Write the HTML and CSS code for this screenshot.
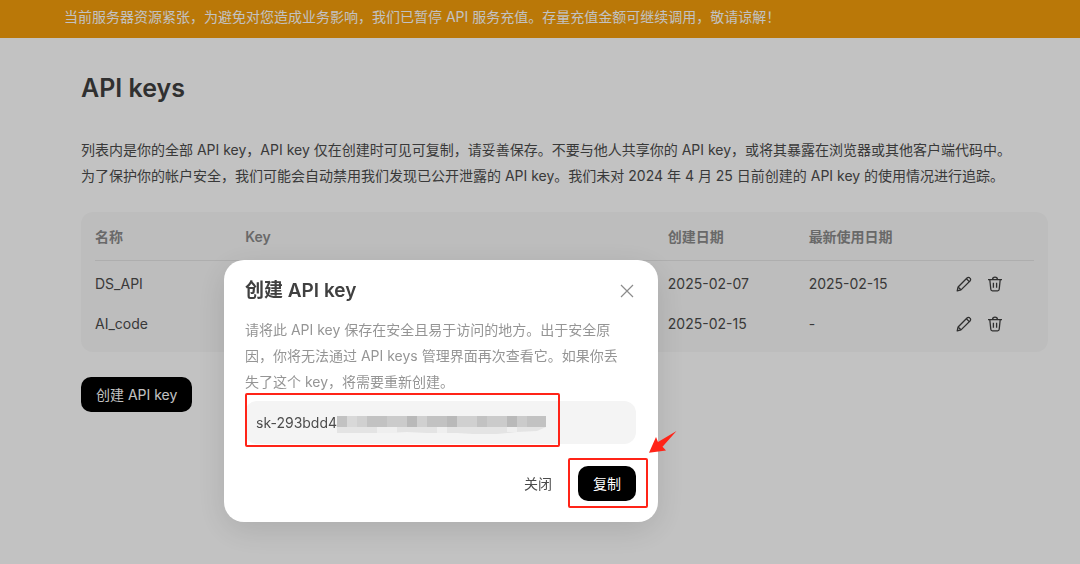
FILE: index.html
```html
<!DOCTYPE html>
<html lang="zh-CN">
  <head>
    <meta charset="UTF-8" />
    <meta name="viewport" content="width=device-width, initial-scale=1.0" />
    <title>API keys</title>
    <link rel="stylesheet" href="styles.css">
  </head>
  <body>
    <!-- icons shared by the table rows -->
    <svg class="sprite" aria-hidden="true">
      <symbol id="pencil" viewBox="0 0 16 16">
        <path d="M1.2 14.8l.9-3.8L11 2a2 2 0 0 1 2.9 0l.1.1a2 2 0 0 1 0 2.9L5 13.9z" />
        <path d="M10.4 2.7l2.9 2.9M2.3 11.2l2.6 2.6" />
      </symbol>
      <symbol id="trash" viewBox="0 0 16 16">
        <path d="M1 3.6h14M5.6 3.4q0-2.2 2.4-2.2t2.4 2.2" />
        <path d="M2.8 3.8l1 9.5q.1 1.5 1.6 1.5h5.2q1.5 0 1.6-1.5l1-9.5M6.4 6.8v5M9.6 6.8v5" />
      </symbol>
    </svg>

    <div class="banner">当前服务器资源紧张，为避免对您造成业务影响，我们已暂停 API 服务充值。存量充值金额可继续调用，敬请谅解！</div>

    <main class="page">
      <h1>API keys</h1>
      <p class="intro">列表内是你的全部 API key，API key 仅在创建时可见可复制，请妥善保存。不要与他人共享你的 API key，或将其暴露在浏览器或其他客户端代码中。<br />为了保护你的帐户安全，我们可能会自动禁用我们发现已公开泄露的 API key。我们未对 2024 年 4 月 25 日前创建的 API key 的使用情况进行追踪。</p>

      <div class="card">
        <table>
          <thead>
            <tr>
              <th class="col-name">名称</th>
              <th class="col-key">Key</th>
              <th class="col-date">创建日期</th>
              <th class="col-used">最新使用日期</th>
              <th class="col-actions"></th>
            </tr>
          </thead>
          <tbody>
            <tr>
              <td>DS_API</td>
              <td></td>
              <td>2025-02-07</td>
              <td>2025-02-15</td>
              <td>
                <div class="actions">
                  <button aria-label="编辑"><svg><use href="#pencil" /></svg></button>
                  <button aria-label="删除"><svg><use href="#trash" /></svg></button>
                </div>
              </td>
            </tr>
            <tr>
              <td>AI_code</td>
              <td></td>
              <td>2025-02-15</td>
              <td>-</td>
              <td>
                <div class="actions">
                  <button aria-label="编辑"><svg><use href="#pencil" /></svg></button>
                  <button aria-label="删除"><svg><use href="#trash" /></svg></button>
                </div>
              </td>
            </tr>
          </tbody>
        </table>
      </div>

      <button class="btn">创建 API key</button>
    </main>

    <div class="overlay">
      <div class="modal" role="dialog" aria-modal="true" aria-labelledby="modal-title">
        <div class="modal-head">
          <h2 id="modal-title">创建 API key</h2>
          <button class="close" aria-label="关闭">
            <svg viewBox="0 0 14 14"><path d="M1 1l12 12M13 1L1 13" /></svg>
          </button>
        </div>
        <p class="modal-text">请将此 API key 保存在安全且易于访问的地方。出于安全原<br />因，你将无法通过 API keys 管理界面再次查看它。如果你丢<br />失了这个 key，将需要重新创建。</p>

        <div class="field">
          <input type="text" value="sk-293bdd4" aria-label="API key" readonly />
          <!-- mosaic over the rest of the key -->
          <svg class="mosaic" viewBox="0 0 209 18" aria-hidden="true">
            <path fill="#cbcbcb" d="M0 0h209v11H0z" />
            <path fill="#c2c2c2" d="M0 0h10v11H0zM30 0h20v11H30zM90 0h20v11H90zM140 0h10v11h-10zM190 0h19v11h-19z" />
            <path fill="#d8d8d8" d="M10 0h10v11H10z" />
            <path fill="#d0d0d0" d="M20 0h10v11H20zM80 0h10v11H80zM120 0h20v11h-20z" />
            <path fill="#b9b9b9" d="M70 0h10v11H70zM110 0h10v11h-10zM170 0h10v11h-10z" />
            <path fill="#e4e4e4" d="M0 11h209l-9 4-20 1-20 2h-24l-16-1H90l-20-1-20 1H0z" />
            <path fill="#efefef" d="M40 11h20v6H40zM100 11h10v6h-10zM170 11h10v5h-10z" />
          </svg>
          <span class="mark mark-key"></span>
        </div>

        <div class="modal-foot">
          <button class="btn-text">关闭</button>
          <div class="copy">
            <button class="btn">复制</button>
            <span class="mark mark-copy"></span>
            <svg class="arrow" viewBox="0 0 28 22" aria-hidden="true">
              <path d="M0 21.8L7 6l2 5L27.5 0 13.5 15.8l3.5 3.7z" />
            </svg>
          </div>
        </div>
      </div>
    </div>
  </body>
</html>
```

FILE: styles.css
```css
* {
  margin: 0;
  padding: 0;
  box-sizing: border-box;
}

body {
  min-height: 100vh;
  font-family: Inter, "Noto Sans CJK SC", sans-serif;
  font-size: 14px;
  line-height: 26px;
  color: #4c4c4c;
  background-color: #fff;
}

button {
  font: inherit;
  color: inherit;
  background: none;
  border: none;
  cursor: pointer;
}

.sprite {
  display: none;
}

.banner {
  height: 38px;
  padding: 4px 64px;
  color: #fff;
  background-color: #f59e0b;
}

.page {
  padding: 34px 32px 32px 81px;
}

h1 {
  font-size: 25px;
  font-weight: 600;
  line-height: 32px;
  color: #404040;
}

.intro {
  margin: 33px 0 23px;
}

/* keys table */
.card {
  padding: 0 14px 8px;
  margin-bottom: 25px;
  border-radius: 12px;
  background-color: #f9f9f9;
}

table {
  width: 100%;
  table-layout: fixed;
  border-collapse: collapse;
}

th {
  height: 48px;
  padding-top: 2px;
  text-align: left;
  font-weight: 600;
  color: #8b8b8b;
  border-bottom: 1px solid #e5e5e5;
}

td {
  height: 40px;
}

tbody::before {
  content: "";
  display: block;
  height: 3px;
}

.col-name {
  width: 16%;
}
.col-key {
  width: 45%;
}
.col-date {
  width: 15%;
}
.col-used {
  width: 16%;
}

.actions {
  display: flex;
  gap: 15px;
  margin-left: -3px;
}

.actions button {
  display: flex;
}

.actions svg {
  width: 16px;
  height: 16px;
  fill: none;
  stroke: #404040;
  stroke-width: 1.3;
  stroke-linejoin: round;
}

.btn {
  height: 35px;
  padding: 0 15px;
  line-height: 35px;
  color: #fff;
  background-color: #000;
  border-radius: 10px;
}

/* dialog */
.overlay {
  position: fixed;
  inset: 0;
  display: flex;
  align-items: flex-start;
  padding: 260px 0 0 224px;
  background-color: rgba(0, 0, 0, 0.24);
}

.modal {
  width: 434px;
  padding: 18px 22px 21px 21px;
  border-radius: 20px;
  background-color: #fff;
  box-shadow: 0 8px 32px rgba(0, 0, 0, 0.12);
}

.modal-head {
  display: flex;
  justify-content: space-between;
  align-items: center;
}

h2 {
  font-size: 19px;
  font-weight: 600;
  line-height: 26px;
  color: #404040;
}

.close {
  display: flex;
  padding: 2px;
}

.close svg {
  width: 14px;
  height: 14px;
  stroke: #8b8b8b;
  stroke-width: 1.2;
}

.modal-text {
  margin: 13px 0 6px;
  color: #959595;
}

.field {
  position: relative;
}

.field input {
  display: block;
  width: 100%;
  height: 43px;
  padding: 0 11px;
  font: inherit;
  color: #4c4c4c;
  border: none;
  border-radius: 12px;
  outline: none;
  background-color: #f4f4f4;
}

.mosaic {
  position: absolute;
  top: 15px;
  left: 92px;
  width: 209px;
  height: 18px;
}

.modal-foot {
  display: flex;
  justify-content: flex-end;
  gap: 26px;
  margin-top: 22px;
}

.copy {
  position: relative;
}

/* red annotations */
.mark {
  position: absolute;
  border: 2px solid #ff2418;
  border-radius: 2px;
  pointer-events: none;
}

.mark-key {
  top: -8px;
  left: 0;
  width: 315px;
  height: 54px;
}

.mark-copy {
  inset: -8px -12px -7px -10px;
}

.arrow {
  position: absolute;
  top: -35px;
  right: -41px;
  width: 28px;
  height: 22px;
  fill: #ff2418;
}
```
